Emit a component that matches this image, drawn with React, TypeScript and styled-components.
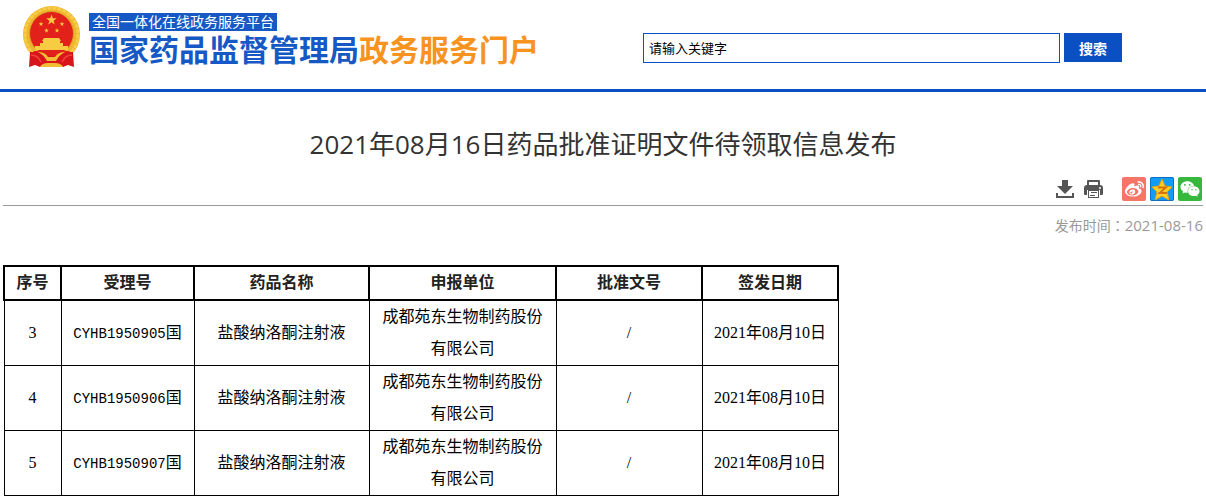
import React from "react";
import styled, { createGlobalStyle } from "styled-components";
import { FaWeibo, FaWeixin } from "react-icons/fa";

const GlobalStyle = createGlobalStyle`
  * { box-sizing: border-box; }
  body {
    margin: 0;
    background: #fff;
    color: #333;
    font-family: "Open Sans", "Noto Sans CJK SC", sans-serif;
    font-size: 14px;
  }
`;

const Header = styled.header`
  display: flex;
  justify-content: space-between;
  align-items: flex-start;
  min-height: 92px;
  padding: 5px 84px 0 22px;
  border-bottom: 3px solid #0b50c3;
`;

const Brand = styled.div`
  display: flex;
  gap: 8px;
`;

const BrandText = styled.div`
  display: flex;
  flex-direction: column;
  align-items: flex-start;
  padding-top: 8px;
  white-space: nowrap;
`;

const Platform = styled.span`
  padding: 0 3px;
  background: #1659c5;
  color: #fff;
  font-size: 14px;
  line-height: 18px;
`;

const SiteName = styled.strong`
  color: #1659c5;
  font-size: 30px;
  line-height: 38px;
`;

const Portal = styled.span`
  color: #f7931e;
`;

const SearchForm = styled.form`
  display: flex;
  gap: 4px;
  flex: 0 1 479px;
  padding-top: 28px;
`;

const SearchInput = styled.input`
  flex: 1;
  min-width: 0;
  height: 30px;
  padding: 0 5px 2px;
  border: 1px solid #0b50c3;
  color: #000;
  font-family: inherit;
  font-size: 13px;
`;

const SearchButton = styled.button`
  width: 58px;
  height: 29px;
  padding: 0;
  border: 0;
  background: #0b50c3;
  color: #fff;
  font-family: inherit;
  font-size: 14px;
  font-weight: 700;
`;

const Main = styled.main`
  padding: 32px 3px 0;
`;

const Title = styled.h1`
  margin: 0;
  color: #333;
  font-size: 26px;
  font-weight: 400;
  line-height: 40px;
  text-align: center;
`;

const Tools = styled.div`
  display: flex;
  justify-content: flex-end;
  align-items: center;
  gap: 4px;
  padding: 13px 1px 4px 0;
  border-bottom: 1px solid #999;
`;

const ToolButton = styled.button`
  display: flex;
  width: 24px;
  height: 24px;
  padding: 0;
  border: 0;
  background: none;
`;

const ShareGroup = styled.div`
  display: flex;
  gap: 4px;
  margin-left: 13px;
`;

const ShareLink = styled.a<{ $color: string }>`
  display: flex;
  align-items: center;
  justify-content: center;
  width: 24px;
  height: 24px;
  border-radius: 2px;
  background: ${(p) => p.$color};
  color: #fff;
`;

const Published = styled.p`
  margin: 8px 0 28px;
  color: #999;
  line-height: 22px;
  text-align: right;
`;

const Colon = styled.span`
  font-family: "Noto Sans CJK TC", sans-serif;
`;

const PublishedDate = styled.time`
  font-size: 15px;
`;

const DataTable = styled.table`
  width: 836px;
  max-width: 100%;
  border-collapse: collapse;
  table-layout: fixed;
  color: #000;
  font-family: "Liberation Serif", "Noto Sans CJK SC", serif;
  font-size: 16px;
  line-height: 32px;
  text-align: center;
`;

const Col = styled.col<{ $width: number }>`
  width: ${(p) => p.$width}px;
`;

const HeadCell = styled.th`
  padding: 0;
  border: 2px solid #000;
  color: #222;
`;

const Cell = styled.td`
  padding: 0 10px;
  border: 1px solid #000;
`;

const NumberCell = styled(Cell)`
  padding: 0;
  white-space: nowrap;
`;

const Code = styled.span`
  font-family: "Liberation Mono", monospace;
  font-size: 14px;
`;

const starPoints = (cx: number, cy: number, r: number) =>
  Array.from({ length: 10 }, (_, i) => {
    const a = (Math.PI / 5) * i - Math.PI / 2;
    const d = i % 2 ? r * 0.4 : r;
    return `${(cx + d * Math.cos(a)).toFixed(2)},${(cy + d * Math.sin(a)).toFixed(2)}`;
  }).join(" ");

const Emblem = () => (
  <svg width="59" height="63" viewBox="0 0 59 63" role="img" aria-label="国徽">
    <circle cx="29.500" cy="29.500" r="28.500" fill="#eeb62f" />
    <circle cx="29.500" cy="29.500" r="26.500" fill="none" stroke="#f7cd48" strokeWidth="3" strokeDasharray="4 1" />
    <circle cx="29.500" cy="28.500" r="22" fill="#e3211b" stroke="#dfa226" strokeWidth="1" />
    <g fill="#f8cc42">
      <polygon points={starPoints(29.5, 15, 5.5)} />
      <polygon points={starPoints(19, 19, 2.5)} />
      <polygon points={starPoints(40, 19, 2.5)} />
      <polygon points={starPoints(24.5, 25.5, 2.5)} />
      <polygon points={starPoints(35, 25.5, 2.5)} />
      <path d="M22 33h15l2 3H20zM21 36h17v2H21zM18 38h23v4H18zM13 41h33v4H13z" />
    </g>
    <path d="M12 46h35l4 5H8z" fill="#e3211b" />
    <path d="M8 47q11 0 15 4h13q4-4 15-4l1 15-6-2-5 2-5-3H23l-5 3-5-2-6 2z" fill="#d8141b" />
    <path d="M16 47q7 0 10 5h7q3-5 10-5-6 3-9 9h-9q-3-6-9-9zM18 62q2-4 8-4h7q6 0 8 4z" fill="#f1bd35" />
    <path d="M9 50q7 0 10 7M50 50q-7 0-10 7" fill="none" stroke="#f0443a" strokeWidth="1.500" />
  </svg>
);

const DownloadIcon = () => (
  <svg width="24" height="24" viewBox="0 0 24 24" fill="#555" aria-hidden="true">
    <path d="M9 3h6v6h5l-8 8-8-8h5zM3 16h2v3h14v-3h2v5H3z" />
  </svg>
);

const PrintIcon = () => (
  <svg width="24" height="24" viewBox="0 0 24 24" fill="#555" aria-hidden="true">
    <path d="M7 3h11q1 0 1 1v4h-2V5H8v3H6V4q0-1 1-1z" />
    <path d="M6 8h13q3 0 3 3v6q0 1-1 1h-2v-5H6v5H4q-1 0-1-1v-6q0-3 3-3z" />
    <path d="M7 13h11v8H7zm1 1v6h9v-6z" fillRule="evenodd" />
    <path d="M10 15h6v1h-6zM9 18h5v1H9z" />
    <circle cx="19" cy="11" r="1" fill="#fff" />
  </svg>
);

const QzoneIcon = () => (
  <svg width="24" height="24" viewBox="0 0 24 24" aria-hidden="true">
    <rect x="0.500" y="0.500" width="23" height="23" rx="1.500" fill="#129cf5" stroke="#0d6fc4" />
    <path d="m12 2 3 7 7 1-5 5 2 8-7-4-7 4 2-8-5-5 7-1z" fill="#ffcf24" stroke="#e8a312" strokeWidth="1" />
    <path d="M8 10.500h8L9.500 16H17" fill="none" stroke="#d5700d" strokeWidth="1.800" />
  </svg>
);

const headings = ["序号", "受理号", "药品名称", "申报单位", "批准文号", "签发日期"];
const widths = [57, 133, 175, 187, 146, 136];

const rows = [
  { no: 3, code: "CYHB1950905" },
  { no: 4, code: "CYHB1950906" },
  { no: 5, code: "CYHB1950907" },
];

export default function App() {
  return (
    <>
      <GlobalStyle />
      <Header>
        <Brand>
          <Emblem />
          <BrandText>
            <Platform>全国一体化在线政务服务平台</Platform>
            <SiteName>
              国家药品监督管理局<Portal>政务服务门户</Portal>
            </SiteName>
          </BrandText>
        </Brand>
        <SearchForm onSubmit={(e) => e.preventDefault()}>
          <SearchInput type="text" aria-label="关键字" defaultValue="请输入关键字" />
          <SearchButton type="submit">搜索</SearchButton>
        </SearchForm>
      </Header>
      <Main>
        <Title>2021年08月16日药品批准证明文件待领取信息发布</Title>
        <Tools>
          <ToolButton type="button" aria-label="下载">
            <DownloadIcon />
          </ToolButton>
          <ToolButton type="button" aria-label="打印">
            <PrintIcon />
          </ToolButton>
          <ShareGroup>
            <ShareLink href="#weibo" aria-label="微博" $color="#f57567">
              <FaWeibo size={19} />
            </ShareLink>
            <ShareLink href="#qzone" aria-label="QQ空间" $color="#129cf5">
              <QzoneIcon />
            </ShareLink>
            <ShareLink href="#wechat" aria-label="微信" $color="#35b83c">
              <FaWeixin size={20} />
            </ShareLink>
          </ShareGroup>
        </Tools>
        <Published>
          发布时间<Colon>：</Colon>
          <PublishedDate dateTime="2021-08-16">2021-08-16</PublishedDate>
        </Published>
        <DataTable>
          <colgroup>
            {widths.map((w, i) => (
              <Col key={i} $width={w} />
            ))}
          </colgroup>
          <thead>
            <tr>
              {headings.map((h) => (
                <HeadCell key={h} scope="col">
                  {h}
                </HeadCell>
              ))}
            </tr>
          </thead>
          <tbody>
            {rows.map((r) => (
              <tr key={r.no}>
                <NumberCell>{r.no}</NumberCell>
                <NumberCell>
                  <Code>{r.code}</Code>国
                </NumberCell>
                <Cell>盐酸纳洛酮注射液</Cell>
                <Cell>成都苑东生物制药股份有限公司</Cell>
                <Cell>/</Cell>
                <NumberCell>2021年08月10日</NumberCell>
              </tr>
            ))}
          </tbody>
        </DataTable>
      </Main>
    </>
  );
}
